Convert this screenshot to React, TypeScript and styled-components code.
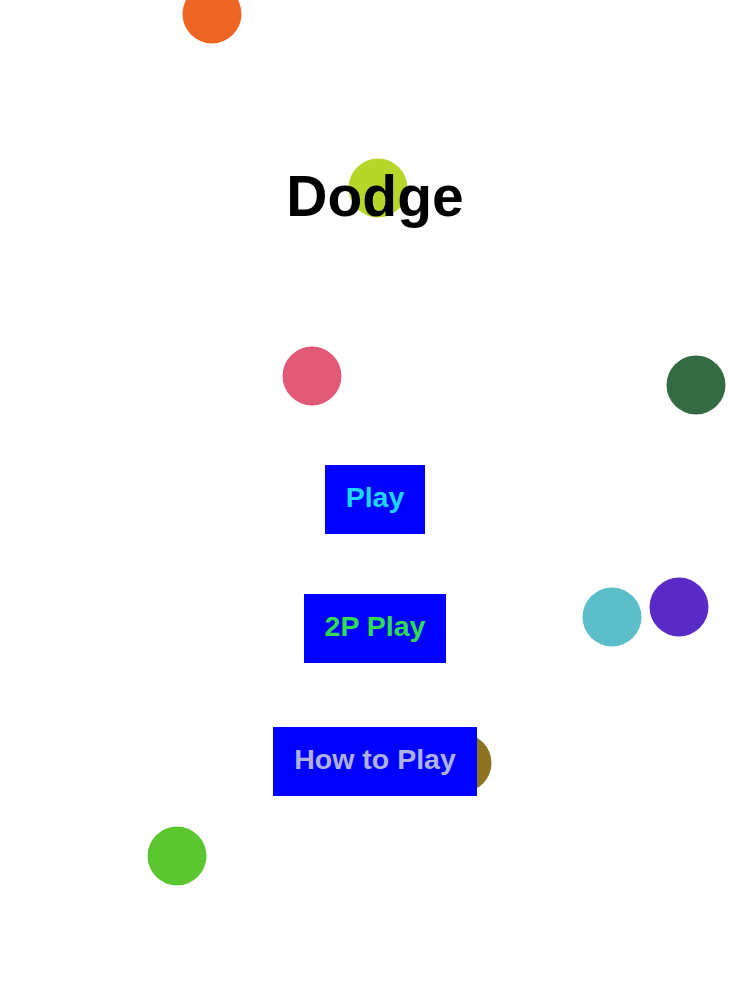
import React from "react";
import styled, { createGlobalStyle } from "styled-components";

const Global = createGlobalStyle`
  html, body { margin: 0; padding: 0; background: #ffffff; }
  body { font-family: "Liberation Sans", Arial, sans-serif; }
`;

const Page = styled.div`
  position: relative;
  width: 750px;
  height: 1000px;
  overflow: hidden;
  background: #ffffff;
`;

const Field = styled.div`
  position: absolute;
  inset: 0;
  z-index: 0;
`;

const Ball = styled.div<{ $color: string }>`
  position: absolute;
  width: 59px;
  height: 59px;
  border-radius: 50%;
  background: ${(p) => p.$color};
  transform: translate(-50%, -50%);
`;

const Menu = styled.main`
  position: relative;
  z-index: 1;
  display: flex;
  flex-direction: column;
  align-items: center;
  padding-top: 168px;
`;

const Title = styled.h1`
  margin: 0 0 240px;
  font-family: "Liberation Sans", Arial, sans-serif;
  font-weight: 700;
  font-size: 57px;
  line-height: 57px;
  color: #000000;
`;

const Buttons = styled.div`
  display: flex;
  flex-direction: column;
  align-items: center;
  gap: 60px;
`;

const MenuButton = styled.button<{ $text: string; $shift?: number }>`
  border: none;
  margin: ${(p) => p.$shift ?? 0}px 0 0;
  background: #0000ff;
  color: ${(p) => p.$text};
  font-family: "Liberation Sans", Arial, sans-serif;
  font-weight: 700;
  font-size: 28.5px;
  line-height: 33px;
  padding: 16px 21px 20px;
  cursor: pointer;
`;

const balls = [
  { x: 212, y: 14, c: "#ee6422" },
  { x: 378, y: 188, c: "#b6d62a" },
  { x: 312, y: 376, c: "#e05a78" },
  { x: 696, y: 385, c: "#356b43" },
  { x: 612, y: 617, c: "#5bbec8" },
  { x: 679, y: 607, c: "#5a2ac6" },
  { x: 462, y: 763, c: "#8c7322" },
  { x: 177, y: 856, c: "#5cc631" },
];

export default function App() {
  return (
    <Page>
      <Global />
      <Field>
        {balls.map((b, i) => (
          <Ball key={i} $color={b.c} style={{ left: b.x, top: b.y }} />
        ))}
      </Field>
      <Menu>
        <Title>Dodge</Title>
        <Buttons>
          <MenuButton $text="#1ed6ff">Play</MenuButton>
          <MenuButton $text="#30dc50">2P Play</MenuButton>
          <MenuButton $text="#adb2e2" $shift={4}>
            How to Play
          </MenuButton>
        </Buttons>
      </Menu>
    </Page>
  );
}
